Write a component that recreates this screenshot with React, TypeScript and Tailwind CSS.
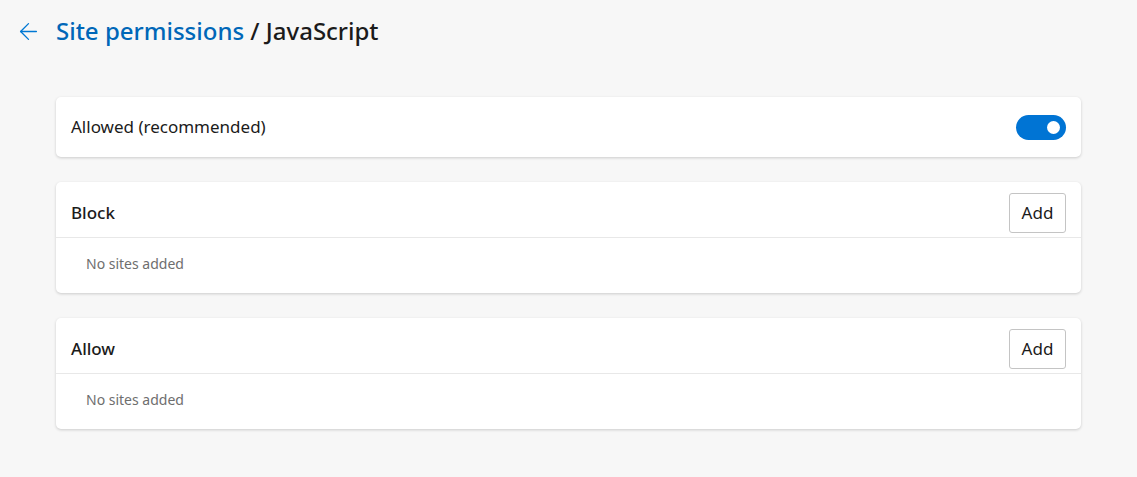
import { ArrowLeft } from 'lucide-react';

const font = { fontFamily: '"Noto Sans", "Open Sans", sans-serif' };

const Toggle = () => (
  <div className="flex items-center justify-end w-[50px] h-[25px] rounded-full bg-[#0074d4] px-[6px]">
    <span className="w-[13px] h-[13px] rounded-full bg-white" />
  </div>
);

const SiteList = ({ title }: { title: string }) => (
  <section className="bg-white rounded-[5px] shadow-[0_1px_3px_rgba(0,0,0,0.18)]">
    <div className="flex items-center justify-between h-[56px] pt-[6px] px-[15px] border-b border-[#e8e8e8]">
      <h2 className="text-[17px] font-medium text-[#1b1b1b]">{title}</h2>
      <button className="w-[57px] h-[40px] border border-[#c4c4c4] rounded-[3px] bg-white text-[17px] text-[#1b1b1b]">
        Add
      </button>
    </div>
    <div className="flex items-center h-[55px] pl-[30px] pb-[5px]">
      <p className="text-[14px] text-[#6e6e6e]">No sites added</p>
    </div>
  </section>
);

export default function App() {
  return (
    <div style={font} className="min-h-[477px] bg-[#f7f7f7]">
      <header className="flex items-center h-[62px] pl-[15px]">
        <ArrowLeft size={27} strokeWidth={1.2} className="text-[#0078d4]" />
        <h1 className="ml-[14px] text-[24px] font-medium text-[#1b1b1b]">
          <span className="text-[#0067b8]">Site permissions</span> / JavaScript
        </h1>
      </header>
      <main className="flex flex-col gap-[25px] pt-[35px] pl-[56px] w-[1081px]">
        <section className="flex items-center justify-between h-[60px] px-[15px] bg-white rounded-[5px] shadow-[0_1px_3px_rgba(0,0,0,0.18)]">
          <span className="text-[17px] text-[#1b1b1b]">Allowed (recommended)</span>
          <Toggle />
        </section>
        <SiteList title="Block" />
        <SiteList title="Allow" />
      </main>
    </div>
  );
}
